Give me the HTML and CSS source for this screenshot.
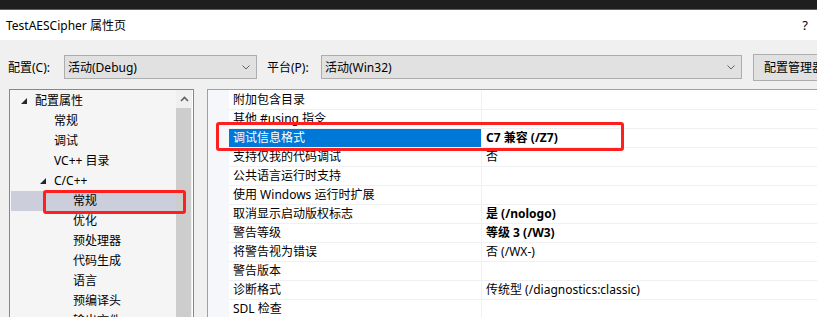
FILE: index.html
```html
<!DOCTYPE html>
<html lang="zh-CN">
<head>
    <meta charset="UTF-8">
    <title>TestAESCipher 属性页</title>
    <link rel="stylesheet" href="styles.css">
</head>
<body>
    <div class="window">
        <div class="chrome"></div>
        <div class="titlebar">
            <span class="title">TestAESCipher 属性页</span>
            <span class="help">?</span>
        </div>
        <div class="client">
            <div class="config-row">
                <span class="field-label">配置(C):</span>
                <div class="combo combo-config">
                    <span>活动(Debug)</span>
                    <svg class="chevron" width="8" height="5" viewBox="0 0 8 5"><path d="M0.5 0.5 L4 4 L7.5 0.5" fill="none" stroke="#606060" stroke-width="1"/></svg>
                </div>
                <span class="field-label platform-label">平台(P):</span>
                <div class="combo combo-platform">
                    <span>活动(Win32)</span>
                    <svg class="chevron" width="8" height="5" viewBox="0 0 8 5"><path d="M0.5 0.5 L4 4 L7.5 0.5" fill="none" stroke="#606060" stroke-width="1"/></svg>
                </div>
                <button class="manager-btn">配置管理器(O)...</button>
            </div>

            <div class="panels">
                <div class="tree">
                    <div class="tree-list">
                        <div class="node lvl1"><span class="twisty"><svg width="6" height="6" viewBox="0 0 6 6"><path d="M6 0 L6 6 L0 6 Z" fill="#262626"/></svg></span>配置属性</div>
                        <div class="node lvl2">常规</div>
                        <div class="node lvl2">调试</div>
                        <div class="node lvl2">VC++ 目录</div>
                        <div class="node lvl2"><span class="twisty"><svg width="6" height="6" viewBox="0 0 6 6"><path d="M6 0 L6 6 L0 6 Z" fill="#262626"/></svg></span>C/C++</div>
                        <div class="node lvl3 selected">常规</div>
                        <div class="node lvl3">优化</div>
                        <div class="node lvl3">预处理器</div>
                        <div class="node lvl3">代码生成</div>
                        <div class="node lvl3">语言</div>
                        <div class="node lvl3">预编译头</div>
                        <div class="node lvl3">输出文件</div>
                    </div>
                    <div class="scrollbar">
                        <div class="scroll-up">
                            <svg width="9" height="6" viewBox="0 0 9 6"><path d="M1 5 L4.5 1.5 L8 5" fill="none" stroke="#606060" stroke-width="1.6"/></svg>
                        </div>
                        <div class="scroll-thumb"></div>
                    </div>
                </div>

                <div class="grid">
                    <div class="grid-margin"></div>
                    <div class="grid-rows">
                        <div class="prop"><span class="prop-name">附加包含目录</span><span class="prop-value"></span></div>
                        <div class="prop"><span class="prop-name">其他 #using 指令</span><span class="prop-value"></span></div>
                        <div class="prop active"><span class="prop-name">调试信息格式</span><span class="prop-value strong">C7 兼容 (/Z7)</span></div>
                        <div class="prop"><span class="prop-name">支持仅我的代码调试</span><span class="prop-value">否</span></div>
                        <div class="prop"><span class="prop-name">公共语言运行时支持</span><span class="prop-value"></span></div>
                        <div class="prop"><span class="prop-name">使用 Windows 运行时扩展</span><span class="prop-value"></span></div>
                        <div class="prop"><span class="prop-name">取消显示启动版权标志</span><span class="prop-value strong">是 (/nologo)</span></div>
                        <div class="prop"><span class="prop-name">警告等级</span><span class="prop-value strong">等级 3 (/W3)</span></div>
                        <div class="prop"><span class="prop-name">将警告视为错误</span><span class="prop-value">否 (/WX-)</span></div>
                        <div class="prop"><span class="prop-name">警告版本</span><span class="prop-value"></span></div>
                        <div class="prop"><span class="prop-name">诊断格式</span><span class="prop-value">传统型 (/diagnostics:classic)</span></div>
                        <div class="prop"><span class="prop-name">SDL 检查</span><span class="prop-value"></span></div>
                    </div>
                </div>
            </div>
        </div>

        <!-- red annotation boxes from the screenshot -->
        <div class="mark mark-tree"></div>
        <div class="mark mark-grid"></div>
    </div>
</body>
</html>
```

FILE: styles.css
```css
body {
    margin: 0;
    font-family: "Noto Sans", "Noto Sans CJK SC", sans-serif;
    font-size: 12px;
    color: #000;
    background: #f0f0f0;
}

.window {
    position: relative;
    width: 817px;
    height: 317px;
    overflow: hidden;
    display: flex;
    flex-direction: column;
}

.chrome {
    height: 9px;
    background: #1e1e1e;
    border-bottom: 1px solid #2f7d4a;
    flex-shrink: 0;
}

.titlebar {
    height: 30px;
    background: #fff;
    display: flex;
    align-items: center;
    justify-content: space-between;
    padding: 0 9px 0 6px;
    flex-shrink: 0;
}

.help {
    font-size: 13px;
}

.client {
    flex: 1;
    background: #f0f0f0;
    padding-top: 14px;
    display: flex;
    flex-direction: column;
    min-height: 0;
}

.config-row {
    display: flex;
    align-items: center;
    height: 26px;
    padding-left: 8px;
    flex-shrink: 0;
}

.field-label {
    width: 56px;
    flex-shrink: 0;
}

.platform-label {
    margin-left: 10px;
    width: 54px;
}

.combo {
    height: 24px;
    box-sizing: border-box;
    border: 1px solid #adadad;
    background: #e1e1e1;
    display: flex;
    align-items: center;
    justify-content: space-between;
    padding: 0 6px 0 3px;
    flex-shrink: 0;
}

.combo-config {
    width: 193px;
}

.combo-platform {
    width: 421px;
}

.chevron {
    display: block;
}

.manager-btn {
    margin-left: 11px;
    height: 27px;
    width: 110px;
    flex-shrink: 0;
    box-sizing: border-box;
    border: 1px solid #adadad;
    background: #e1e1e1;
    font-family: inherit;
    font-size: 12px;
    color: #000;
    text-align: left;
    padding: 0 0 0 10px;
    white-space: nowrap;
}

.panels {
    flex: 1;
    display: flex;
    margin-top: 9px;
    padding-left: 9px;
    min-height: 0;
}

.tree {
    width: 185px;
    box-sizing: border-box;
    border: 1px solid #828790;
    border-bottom: none;
    background: #f5f5f5;
    display: flex;
    flex-shrink: 0;
    overflow: hidden;
}

.tree-list {
    flex: 1;
    padding-top: 1px;
}

.node {
    height: 20px;
    line-height: 20px;
    white-space: nowrap;
}

.lvl1 { padding-left: 25px; }
.lvl2 { padding-left: 44px; }
.lvl3 { padding-left: 63px; }

.node.selected {
    background: #cccedb;
    margin-left: 1px;
    padding-left: 62px;
}

.twisty {
    display: inline-block;
    width: 19px;
    margin-left: -19px;
    vertical-align: top;
}

.twisty svg {
    display: block;
    margin: 7px 0 0 5px;
}

.scrollbar {
    width: 16px;
    background: #f0f0f0;
    border-right: 1px solid #fff;
    display: flex;
    flex-direction: column;
}

.scroll-up {
    height: 18px;
    display: flex;
    justify-content: center;
    align-items: center;
}

.scroll-thumb {
    flex: 1;
    background: #cdcdcd;
    margin-right: 1px;
}

.grid {
    flex: 1;
    margin-left: 13px;
    border-top: 1px solid #a0a0a0;
    border-left: 1px solid #a0a0a0;
    display: flex;
    background: #fff;
    min-width: 0;
}

.grid-margin {
    width: 21px;
    background: #f5f7fb;
    flex-shrink: 0;
}

.grid-rows {
    flex: 1;
    padding-top: 1px;
}

.prop {
    display: flex;
    height: 18px;
    line-height: 18px;
    border-bottom: 1px solid #eef0f4;
    white-space: nowrap;
}

.prop-name {
    width: 248px;
    padding-left: 4px;
    border-right: 1px solid #eef0f4;
    flex-shrink: 0;
}

.prop-value {
    padding-left: 4px;
}

.prop.active .prop-name {
    background: #0078d7;
    color: #fff;
}

.strong {
    font-weight: bold;
}

.mark {
    position: absolute;
    border: 3px solid #ff1f1f;
    border-radius: 3px;
    box-sizing: border-box;
}

.mark-tree {
    left: 43px;
    top: 190px;
    width: 143px;
    height: 24px;
}

.mark-grid {
    left: 216px;
    top: 122px;
    width: 408px;
    height: 29px;
}
```
